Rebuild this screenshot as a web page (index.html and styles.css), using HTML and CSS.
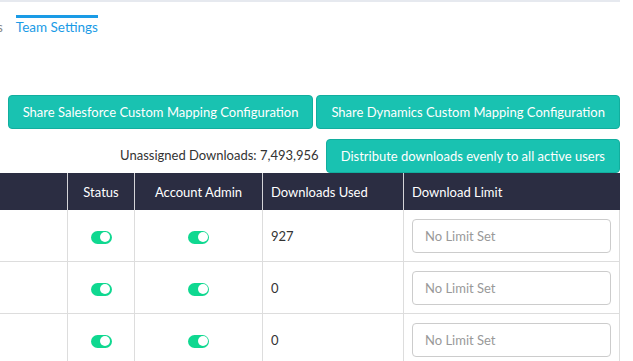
FILE: index.html
```html
<!DOCTYPE html>
<html lang="en">
<head>
<meta charset="UTF-8" />
<meta name="viewport" content="width=device-width, initial-scale=1.0" />
<title>Team Settings</title>
<link rel="stylesheet" href="styles.css">
</head>
<body>
<div class="page">
  <div class="tabs">
    <div class="tab">s</div>
    <div class="tab active">Team Settings</div>
  </div>

  <div class="actions">
    <button class="btn">Share Salesforce Custom Mapping Configuration</button>
    <button class="btn">Share Dynamics Custom Mapping Configuration</button>
  </div>
  <div class="actions second">
    <span class="unassigned">Unassigned Downloads: 7,493,956</span>
    <button class="btn">Distribute downloads evenly to all active users</button>
  </div>

  <table class="users">
    <thead>
      <tr>
        <th class="col-name"></th>
        <th class="col-status">Status</th>
        <th class="col-admin">Account Admin</th>
        <th class="col-used">Downloads Used</th>
        <th class="col-limit">Download Limit</th>
      </tr>
    </thead>
    <tbody>
      <tr>
        <td></td>
        <td class="center"><span class="toggle on"></span></td>
        <td class="center"><span class="toggle on"></span></td>
        <td>927</td>
        <td><input class="limit" type="text" placeholder="No Limit Set"></td>
      </tr>
      <tr>
        <td></td>
        <td class="center"><span class="toggle on"></span></td>
        <td class="center"><span class="toggle on"></span></td>
        <td>0</td>
        <td><input class="limit" type="text" placeholder="No Limit Set"></td>
      </tr>
      <tr>
        <td></td>
        <td class="center"><span class="toggle on"></span></td>
        <td class="center"><span class="toggle on"></span></td>
        <td>0</td>
        <td><input class="limit" type="text" placeholder="No Limit Set"></td>
      </tr>
    </tbody>
  </table>
</div>
</body>
</html>
```

FILE: styles.css
```css
body {
  margin: 0;
  font-family: Lato, "Open Sans", sans-serif;
  font-size: 13px;
  color: #333;
  background-color: #fff;
  overflow: hidden;
}
.page {
  width: 620px;
  border-top: 2px solid #e6e9ef;
}
.tabs {
  display: flex;
  gap: 13px;
  padding-top: 13px;
  height: 80px;
  font-size: 13.5px;
}
.tab {
  color: #888;
  line-height: 19px;
  padding-top: 3px;
  margin-left: -3px;
}
.tab.active {
  color: #1a9be6;
  border-top: 3px solid #1a9be6;
  padding-top: 0;
  margin-left: 0;
}
.actions {
  display: flex;
  justify-content: flex-end;
  align-items: center;
  gap: 3px;
}
.actions.second {
  gap: 7px;
  margin-top: 10px;
}
.btn {
  font-family: inherit;
  font-size: 13px;
  color: #fff;
  background-color: #19c2b1;
  border: 1px solid #12ae9e;
  border-radius: 4px;
  height: 34px;
  padding: 0 14px;
  white-space: nowrap;
  cursor: pointer;
}
.unassigned {
  color: #333;
  padding-bottom: 3px;
}
.users {
  width: 620px;
  border-collapse: collapse;
  table-layout: fixed;
}
.users th {
  background-color: #2b2d42;
  color: #fff;
  font-weight: normal;
  height: 37px;
  padding: 0 8px;
  text-align: center;
  border-left: 1px solid #d4d4d8;
}
.users th:first-child {
  border-left: none;
}
.users th.col-used,
.users th.col-limit {
  text-align: left;
}
.col-name { width: 51px; }
.col-status { width: 50px; }
.col-admin { width: 111px; }
.col-used { width: 124px; }
.users td {
  height: 51px;
  padding: 0 8px;
  border: 1px solid #ddd;
  border-top: none;
}
.users td:first-child {
  border-left: none;
}
.users td.center {
  text-align: center;
}
.toggle {
  display: inline-block;
  position: relative;
  width: 21px;
  height: 13px;
  border-radius: 7px;
  background-color: #0fd890;
  vertical-align: middle;
}
.toggle::after {
  content: "";
  position: absolute;
  top: 1.5px;
  right: 1.5px;
  width: 10px;
  height: 10px;
  border-radius: 50%;
  background-color: #fff;
}
.limit {
  display: block;
  box-sizing: border-box;
  width: 199px;
  height: 34px;
  padding: 0 12px;
  font-family: inherit;
  font-size: 13px;
  border: 1px solid #ccc;
  border-radius: 4px;
}
.limit::placeholder {
  color: #999;
}
```
